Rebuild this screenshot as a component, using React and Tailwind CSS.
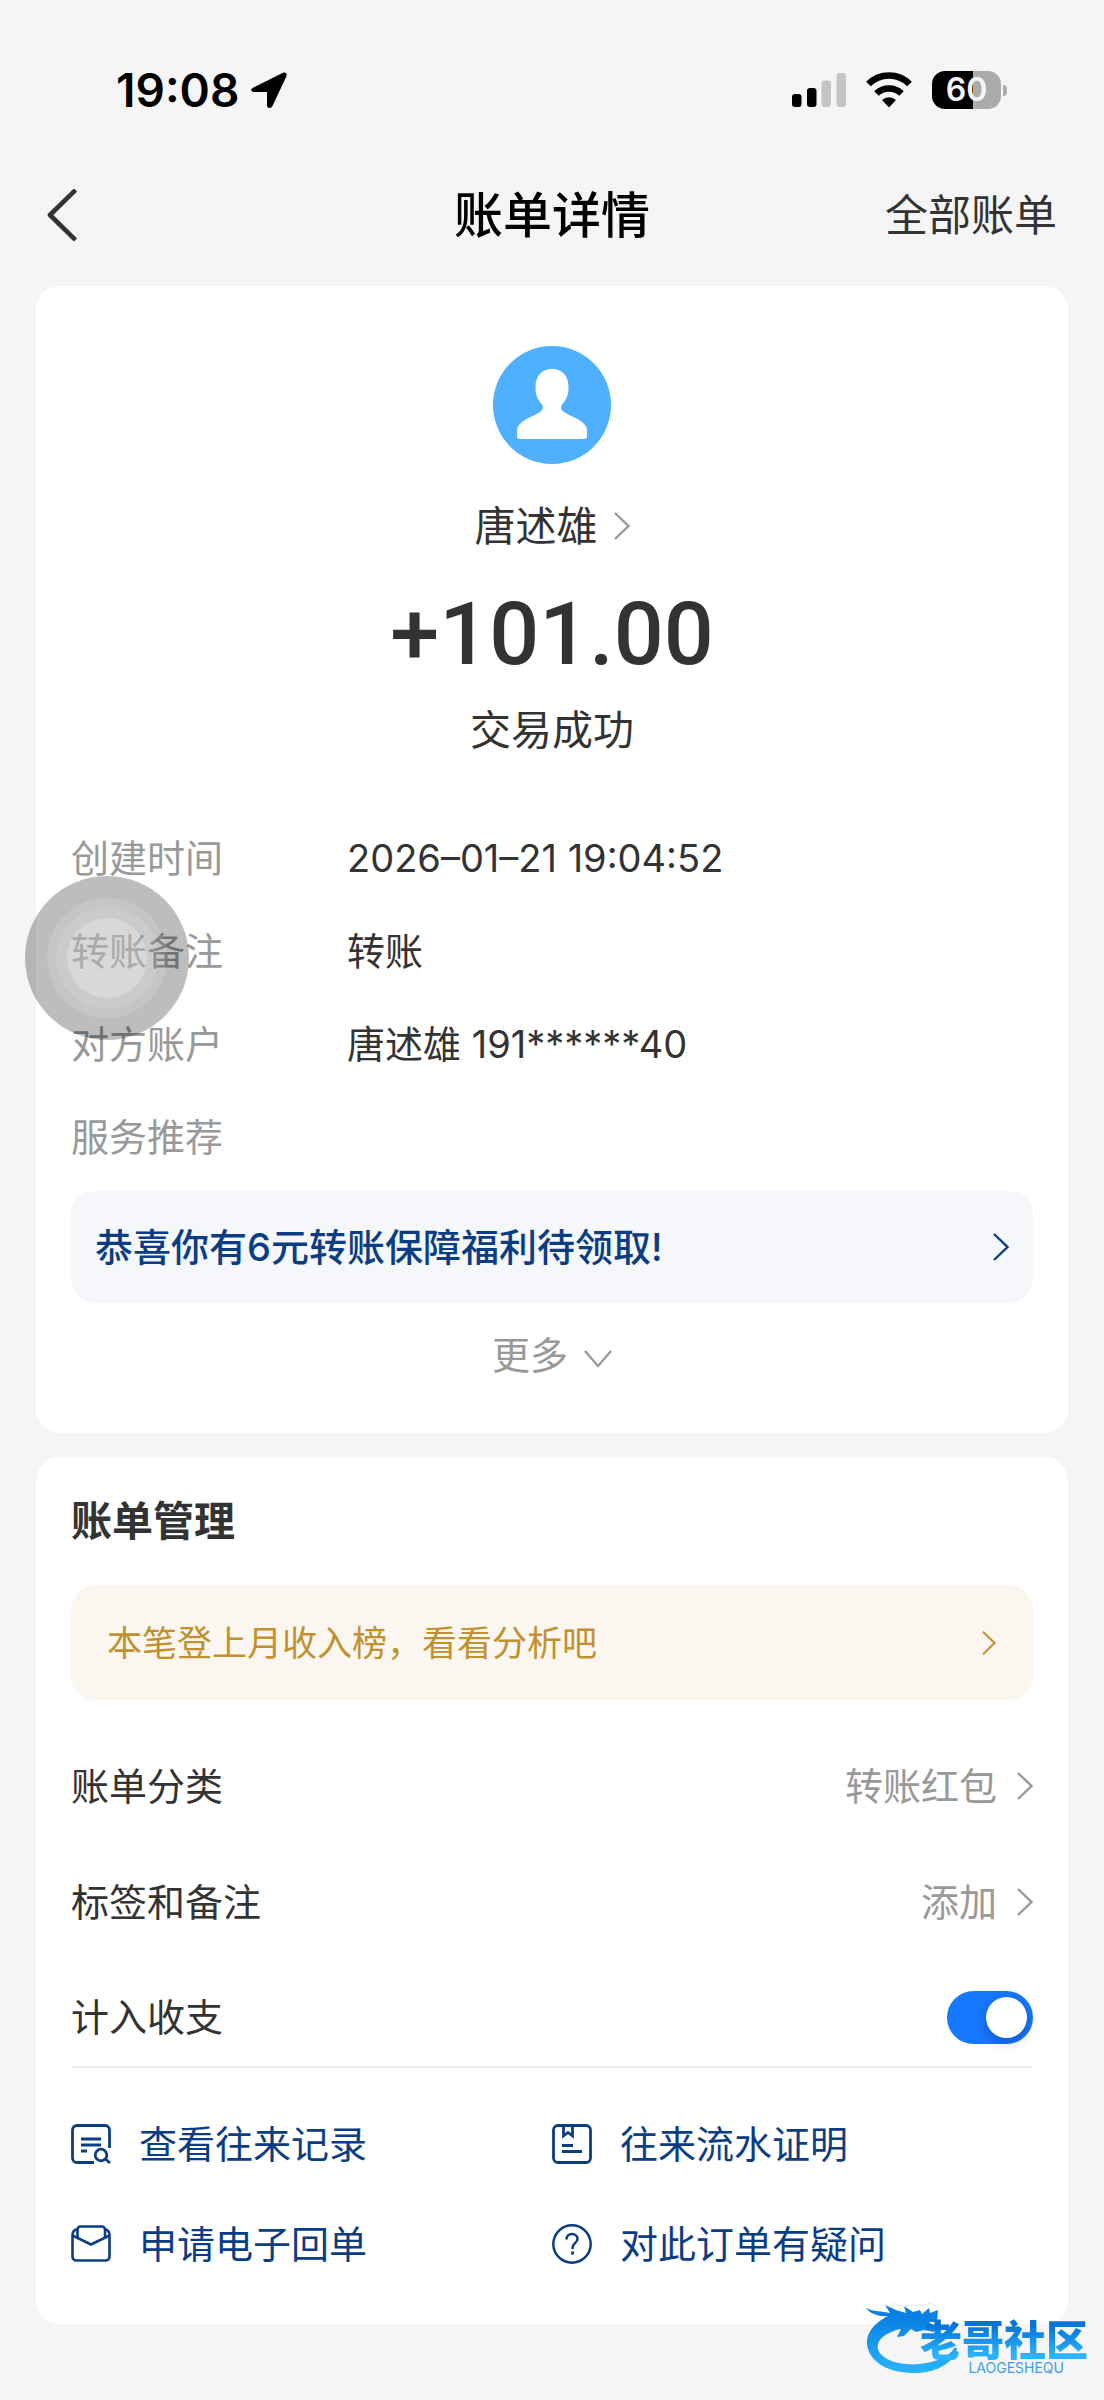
import { useState } from 'react';

const records = [
  { label: '创建时间', value: '2026–01–21 19:04:52' },
  { label: '转账备注', value: '转账' },
  { label: '对方账户', value: '唐述雄 191******40' },
  { label: '服务推荐', value: '' },
];

const settings = [
  { label: '账单分类', value: '转账红包' },
  { label: '标签和备注', value: '添加' },
];

const actions = [
  { label: '查看往来记录', Icon: RecordIcon },
  { label: '往来流水证明', Icon: ProofIcon },
  { label: '申请电子回单', Icon: ReceiptIcon },
  { label: '对此订单有疑问', Icon: QuestionIcon },
];

function Chevron({ className = 'h-7 w-4' }) {
  return (
    <svg className={`shrink-0 ${className}`} viewBox="0 0 16 28" fill="none" aria-hidden="true">
      <path d="M1 1L14.5 14L1 27" stroke="currentColor" strokeWidth="2.4" />
    </svg>
  );
}

function RecordIcon() {
  return (
    <svg className="size-10 shrink-0" viewBox="0 0 40 40" fill="none" stroke="currentColor" strokeWidth="2.8" aria-hidden="true">
      <path d="M23 38.5H6A4.5 4.5 0 0 1 1.5 34V6A4.5 4.5 0 0 1 6 1.5H34A4.5 4.5 0 0 1 38.5 6V24" />
      <path d="M10 15H30M10 21H30M10 27H16" />
      <circle cx="30" cy="31" r="5.8" />
      <path d="M34.5 35L39 39" />
    </svg>
  );
}

function ProofIcon() {
  return (
    <svg className="size-10 shrink-0" viewBox="0 0 40 40" fill="none" stroke="currentColor" strokeWidth="2.8" aria-hidden="true">
      <rect x="1.5" y="1.5" width="37" height="37" rx="4.5" />
      <path d="M11.5 2V12L16 8.5L20.5 12V2" />
      <path d="M10 21.5H21M10 27.5H30" />
    </svg>
  );
}

function ReceiptIcon() {
  return (
    <svg className="size-10 shrink-0" viewBox="0 0 40 40" fill="none" stroke="currentColor" strokeWidth="2.6" aria-hidden="true">
      <path d="M6.5 14V5.5A3 3 0 0 1 9.5 2.5H31A3 3 0 0 1 34 5.5V14" />
      <path d="M6 5C3 6 1.5 8 1.5 11V32.5A4 4 0 0 0 5.5 36.5H34.5A4 4 0 0 0 38.5 32.5V11C38.5 8 37 6 34 5" />
      <path d="M1.5 11.5L20 20.5L38.5 11.5" />
    </svg>
  );
}

function QuestionIcon() {
  return (
    <svg className="size-10 shrink-0" viewBox="0 0 40 40" fill="none" stroke="currentColor" strokeWidth="2.5" aria-hidden="true">
      <circle cx="20" cy="20" r="18.7" />
      <path d="M14.5 15.5C14.5 12 17 10 20 10C23 10 25.5 12 25.5 15C25.5 19 20.5 19 20.5 24V25" />
      <path d="M20.5 27.5V30.5" strokeWidth="3" />
    </svg>
  );
}

function StatusBar() {
  return (
    <div className="flex h-45 items-center justify-between pr-[97px] pl-29">
      <div className="flex items-center gap-3">
        <span className="text-[46px] leading-none font-semibold text-black">19:08</span>
        <svg className="size-9" viewBox="0 0 36 36" aria-hidden="true">
          <path d="M2.5 15.5L31.5 1C34.5 -0.3 36.5 1.5 35.3 4.5L21.5 34C20 37 16 36.5 16 33.5V20H3C-0.5 20 -1 17 2.5 15.5Z" />
        </svg>
      </div>
      <div className="flex items-center gap-5">
        <svg className="h-9 w-[54px]" viewBox="0 0 54 36" aria-hidden="true">
          <rect x="0" y="22" width="9.5" height="13" rx="3" />
          <rect x="15" y="16" width="9.5" height="19" rx="3" />
          <rect x="29.5" y="8.5" width="9.5" height="26.5" rx="3" fill="#c4c4c4" />
          <rect x="44.5" y="1" width="9.5" height="34" rx="3" fill="#c4c4c4" />
        </svg>
        <svg className="h-9 w-[46px]" viewBox="0 0 46 36" fill="none" stroke="#000" aria-hidden="true">
          <path d="M2.5 12A29 29 0 0 1 43.5 12" strokeWidth="6.5" />
          <path d="M10.5 21.5A18 18 0 0 1 35.5 21.5" strokeWidth="6.5" />
          <path d="M16 28A10 10 0 0 1 30 28L23 35.5Z" fill="#000" stroke="none" />
        </svg>
        <div className="flex items-center gap-[2px]">
          <div className="flex h-[38px] w-[69px] items-center justify-center rounded-[13px] bg-linear-to-r from-black from-60% to-[#ababab] to-60%">
            <span className="text-[32px] leading-none font-semibold text-[#f5f5f5]">60</span>
          </div>
          <span className="h-[11px] w-1 rounded-r-full bg-[#ababab]" />
        </div>
      </div>
    </div>
  );
}

function Header() {
  return (
    <header className="grid h-[70px] grid-cols-[1fr_auto_1fr] items-center px-[47px]">
      <button type="button" aria-label="返回" className="justify-self-start text-[#333]">
        <svg className="h-[52px] w-[30px]" viewBox="0 0 30 52" fill="none" aria-hidden="true">
          <path d="M28.5 1L3 26L28.5 51" stroke="currentColor" strokeWidth="4.6" strokeLinejoin="round" />
        </svg>
      </button>
      <h1 className="text-[49px] leading-none font-medium text-black">账单详情</h1>
      <a href="#all" className="justify-self-end text-[43px] leading-none text-[#333]">全部账单</a>
    </header>
  );
}

function Watermark() {
  return (
    <div className="pointer-events-none absolute right-4 bottom-6 flex">
      <svg className="h-[78px] w-[92px]" viewBox="0 0 92 78" aria-hidden="true">
        <defs>
          <linearGradient id="dragon" x1="0" y1="0" x2="0" y2="1">
            <stop offset="0.2" stopColor="#0a80e4" />
            <stop offset="1" stopColor="#2ab4fb" />
          </linearGradient>
        </defs>
        <path
          fill="url(#dragon)"
          d="M0 10C8 14 16 13 24 15L19 7L30 12L40 15L38 8L47 14L54 12L56 16L63 10L64 15L72 12L71 24L63 24L69 29L68 34L58 32L50 34L45 31L38 38L31 39L35 31C20 34 10 42 12 51C15 62 34 68 54 66C72 64 84 58 89 49L91 51C88 64 72 74 52 75C26 76 3 66 1 46C0 34 10 24 22 18C14 19 4 16 0 10Z"
        />
        <path d="M27 5C38 12 50 4 58 8C64 3 70 6 71 11" fill="none" stroke="#e8eef4" strokeWidth="1.2" />
      </svg>
      <div className="-ml-[38px] flex flex-col items-end pt-[18px] font-['Noto_Sans_CJK_SC',sans-serif]">
        <span className="bg-linear-to-b from-[#0672d8] from-20% to-[#2bb4fb] to-90% bg-clip-text text-[42px] leading-11 font-black text-transparent">老哥社区</span>
        <span className="pr-6 font-[Inter,sans-serif] text-sm leading-4 text-[#3d9fe8]">LAOGESHEQU</span>
      </div>
    </div>
  );
}

export default function App() {
  const [counted, setCounted] = useState(true);

  return (
    <div className="relative min-h-screen bg-[#f5f5f5] pb-19 font-[Inter,'Noto_Sans_CJK_SC',sans-serif] text-[38px] leading-14 text-[#333]">
      <StatusBar />
      <Header />

      <main className="mt-9 flex flex-col gap-6 px-9">
        <section className="flex flex-col rounded-3xl bg-white px-[35px] pt-15 pb-[50px]">
          <div className="flex flex-col items-center">
            <svg className="size-[118px]" viewBox="0 0 118 118" aria-hidden="true">
              <circle cx="59" cy="59" r="59" fill="#4fb0ff" />
              <path
                fill="#fff"
                d="M59 23C69 23 76 30 75.5 42C75.5 49 73 54 69.5 58C67 61 68 64 71 66C77 70 84 72 89 76C92 78.5 94 81 94 84V90C94 92 93 93 91 93H27C25 93 24 92 24 90V84C24 81 26 78.5 29 76C34 72 41 70 47 66C50 64 51 61 48.5 58C45 54 42.5 49 42.5 42C42 30 49 23 59 23Z"
              />
            </svg>
            <button type="button" className="mt-[34px] flex items-center gap-4 text-[41px]">
              唐述雄
              <Chevron className="h-7 w-4 text-[#999]" />
            </button>
            <p className="mt-6 font-[Roboto,sans-serif] text-[88px] leading-28 font-medium">+101.00</p>
            <p className="mt-3 text-[41px]">交易成功</p>
          </div>

          <dl className="mt-18 flex flex-col gap-[37px]">
            {records.map((record) => (
              <div key={record.label} className="flex">
                <dt className="w-69 shrink-0 text-[#999]">{record.label}</dt>
                <dd>{record.value}</dd>
              </div>
            ))}
          </dl>

          <a href="#benefit" className="mt-[26px] flex h-28 items-center justify-between rounded-3xl bg-[#f5f7fb] px-6 font-medium text-[#0b3d85]">
            恭喜你有6元转账保障福利待领取!
            <Chevron />
          </a>

          <button type="button" className="mt-6 flex items-center justify-center gap-4 text-[#999]">
            更多
            <svg className="mt-2 h-[18px] w-7" viewBox="0 0 28 18" fill="none" aria-hidden="true">
              <path d="M1 1L14 16L27 1" stroke="currentColor" strokeWidth="2.4" />
            </svg>
          </button>
        </section>

        <section className="rounded-3xl bg-white px-[35px] pt-9 pb-[52px]">
          <h2 className="text-[41px] font-semibold">账单管理</h2>
          <a href="#rank" className="mt-9 flex h-[115px] items-center justify-between rounded-3xl bg-[#fbf7f0] px-9 text-[35px] text-[#c1912f]">
            本笔登上月收入榜，看看分析吧
            <Chevron className="h-6 w-4" />
          </a>

          <div className="mt-7">
            {settings.map((item) => (
              <button key={item.label} type="button" className="flex h-29 w-full items-center justify-between">
                {item.label}
                <span className="flex items-center gap-5 text-[#999]">
                  {item.value}
                  <Chevron />
                </span>
              </button>
            ))}
            <label className="flex h-[106px] items-center justify-between pt-2">
              计入收支
              <input
                type="checkbox"
                role="switch"
                checked={counted}
                onChange={(e) => setCounted(e.target.checked)}
                className="flex h-[53px] w-[86px] appearance-none items-center rounded-full bg-[#e5e5e5] px-[6px] before:size-[41px] before:rounded-full before:bg-white before:shadow-[0_4px_12px_rgba(0,0,0,0.25)] checked:justify-end checked:bg-[#1677ff]"
              />
            </label>
          </div>

          <nav className="grid grid-cols-2 gap-y-11 border-t-2 border-[#eee] pt-12">
            {actions.map(({ label, Icon }) => (
              <a key={label} href="#action" className="flex items-center gap-7 text-[#0b3d85]">
                <Icon />
                {label}
              </a>
            ))}
          </nav>
        </section>
      </main>

      {/* Floating touch button, sits over the bill rows */}
      <button
        type="button"
        aria-label="辅助触控"
        className="absolute top-[876px] left-[25px] flex size-[164px] items-center justify-center rounded-full bg-black/26"
      >
        <span className="flex size-[120px] items-center justify-center rounded-full bg-white/12">
          <span className="flex size-[102px] items-center justify-center rounded-full bg-white/10">
            <span className="size-20 rounded-full bg-white/25" />
          </span>
        </span>
      </button>

      <Watermark />
    </div>
  );
}
